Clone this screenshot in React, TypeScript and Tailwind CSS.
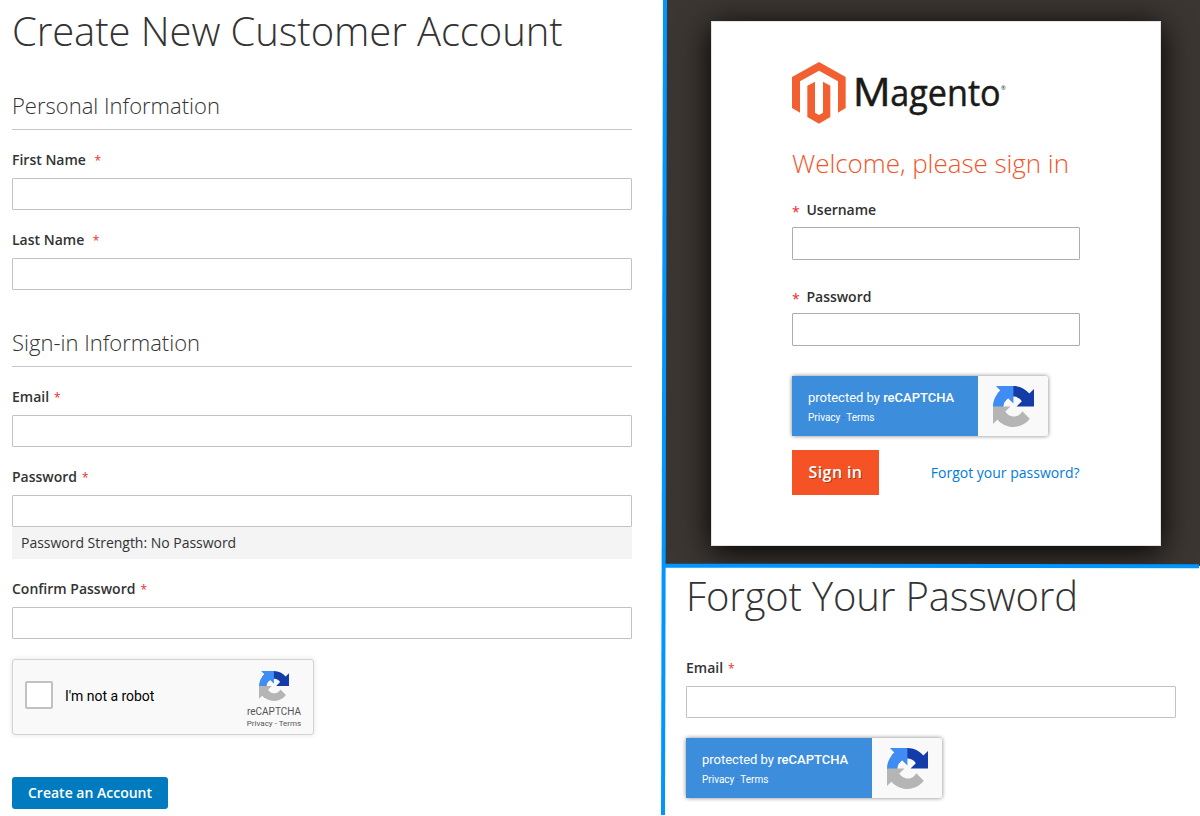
import React from 'react';

function RecaptchaMark({ className }: { className: string }) {
  return (
    <svg viewBox="0 0 64 64" className={className} aria-hidden="true">
      <path fill="#143ca8" d="M64 31.955l-.033-1.37V4.687l-7.16 7.16C50.948 4.674 42.033.093 32.05.093c-10.4 0-19.622 4.96-25.458 12.64l11.736 11.86a15.55 15.55 0 0 1 4.754-5.334c2.05-1.6 4.952-2.906 8.968-2.906.485 0 .86.057 1.135.163 4.976.393 9.288 3.14 11.828 7.124l-8.307 8.307L64 31.953" />
      <path fill="#3f8cf2" d="M31.862.094l-1.37.033H4.594l7.16 7.16C4.58 13.147 0 22.06 0 32.046c0 10.4 4.96 19.622 12.64 25.458L24.5 45.768a15.55 15.55 0 0 1-5.334-4.754c-1.6-2.05-2.906-4.952-2.906-8.968 0-.485.057-.86.163-1.135.393-4.976 3.14-9.288 7.124-11.828l8.307 8.307L31.86.095" />
      <path fill="#b5b5b5" d="M.001 32.045l.033 1.37v25.898l7.16-7.16c5.86 7.173 14.774 11.754 24.76 11.754 10.4 0 19.622-4.96 25.458-12.64l-11.736-11.86a15.55 15.55 0 0 1-4.754 5.334c-2.05 1.6-4.952 2.906-8.968 2.906-.485 0-.86-.057-1.135-.163-4.976-.393-9.288-3.14-11.828-7.124l8.307-8.307c-10.522.04-22.4.066-27.295-.005" />
    </svg>
  );
}

function MagentoLogo() {
  return (
    <svg viewBox="36 36 651 189" className="block h-[63px] w-[217px] overflow-visible" role="img">
      <path fill="#f26032" d="M36 81L117 36L197 81V174L174 188V94L117 62L60 94V188L36 174Z" />
      <path fill="#f26032" d="M82 107L105 95V188L117 195L129 188V95L151 107V201L117 221L82 201Z" />
      <text y="169" fontSize="115" fontWeight="500" fill="#1a1a18" stroke="#1a1a18" strokeWidth="1.5">
        <tspan x="218" textLength="114" lengthAdjust="spacingAndGlyphs">M</tspan>
        <tspan x="331" fontSize="112" textLength="331" lengthAdjust="spacingAndGlyphs">agento</tspan>
      </text>
      <text x="663" y="119" fontSize="17" fill="#1a1a18">®</text>
    </svg>
  );
}

function Field({ label, className = '', gap = 'ml-[5px]' }: { label: string; className?: string; gap?: string }) {
  return (
    <label className={`block ${className}`}>
      <span className="block h-7 text-sm leading-5 font-semibold text-[#333333]">
        {label}
        <span className={`${gap} text-xs font-normal text-[#f02b27]`}>*</span>
      </span>
      <input className="block h-8 w-full rounded-[1px] border border-[#c2c2c2] bg-white px-2" />
    </label>
  );
}

function AdminField({ label, labelClass }: { label: string; labelClass: string }) {
  return (
    <label className="block">
      <span className={`flex text-sm leading-5 font-semibold tracking-[-0.03px] text-[#303030] ${labelClass}`}>
        <span className="w-[14.5px] pt-[2px] font-normal text-[#f02626]">*</span>
        {label}
      </span>
      <input className="block h-[33px] w-full rounded-[1px] border border-[#adadad] bg-white px-2" />
    </label>
  );
}

function RecaptchaBadge({ className = '' }: { className?: string }) {
  return (
    <div className={`flex h-[60px] w-[256px] rounded-[2px] bg-[#f9f9f9] font-['Roboto',sans-serif] shadow-[0_0_4px_#808080] ${className}`}>
      <div className="w-[186px] bg-[#3d8ddd] pt-[14px] pl-4 text-white">
        <div className="text-[13px] leading-4 tracking-[-0.01px] whitespace-nowrap">
          protected by <span className="font-medium">reCAPTCHA</span>
        </div>
        <div className="mt-[6px] flex text-[10px] leading-3">
          <span>Privacy</span>
          <span className="w-[6px] text-center text-[#2e6fb0]">-</span>
          <span>Terms</span>
        </div>
      </div>
      <div className="flex flex-1 items-center justify-center">
        <RecaptchaMark className="h-[41px] w-[41px]" />
      </div>
    </div>
  );
}

function SectionTitle({ children, className }: { children: React.ReactNode; className: string }) {
  return (
    <h2 className={`h-[37px] border-b border-[#c6c6c6] text-[22px] leading-[25px] font-light text-[#333333] ${className}`}>
      {children}
    </h2>
  );
}

function CreateAccount() {
  return (
    <section className="flex w-[632px] shrink-0 flex-col items-start pt-2 pl-3">
      <h1 className="h-[85px] text-[40px] leading-[46px] font-light tracking-[-0.08px] whitespace-nowrap text-[#333333]">
        Create New Customer Account
      </h1>
      <SectionTitle className="w-full">Personal Information</SectionTitle>
      <Field label="First Name" gap="ml-[8.5px]" className="mt-5 w-full" />
      <Field label="Last Name" gap="ml-[8.5px]" className="mt-5 w-full" />
      <SectionTitle className="mt-10 w-full">Sign-in Information</SectionTitle>
      <Field label="Email" className="mt-5 w-full" />
      <Field label="Password" className="mt-5 w-full" />
      <div className="h-8 w-full bg-[#f4f4f4] pl-[9px] text-sm leading-8 tracking-[-0.02px] text-[#333333]">
        Password Strength: No Password
      </div>
      <Field label="Confirm Password" className="mt-5 w-full" />
      <div className="mt-5 flex h-[76px] w-[302px] rounded-[3px] border border-[#d3d3d3] bg-[#f9f9f9] pl-3 font-['Roboto',sans-serif] shadow-[0_0_4px_1px_rgba(0,0,0,0.08)]">
        <div className="mt-[21px] h-7 w-7 rounded-[2px] border-2 border-[#c1c1c1] bg-white" />
        <div className="mt-7 ml-3 flex-1 text-sm leading-[17px] tracking-[-0.03px] text-black">I'm not a robot</div>
        <div className="mr-[11px] flex w-[56px] flex-col items-center pt-[11px] text-[#555555]">
          <RecaptchaMark className="h-[30px] w-[30px]" />
          <div className="mt-[5px] text-[10px] leading-3">reCAPTCHA</div>
          <div className="mt-[1px] text-[8px] leading-[10px] whitespace-nowrap">Privacy - Terms</div>
        </div>
      </div>
      <button className="mt-[42px] h-8 w-[156px] rounded-[3px] bg-[#007bc0] text-sm font-semibold text-white">
        Create an Account
      </button>
    </section>
  );
}

function AdminLogin() {
  return (
    <section className="h-[566px] overflow-hidden bg-[#3b3632] pt-[21px] pl-[46px]">
      <div className="h-[525px] w-[450px] border border-[#e3e3e3] bg-white pt-10 pr-20 pl-20 shadow-[0_5px_30px_0_#000000]">
        <MagentoLogo />
        <h2 className="mt-5 text-[26px] leading-9 font-light tracking-[-0.04px] whitespace-nowrap text-[#f1562b]">
          Welcome, please sign in
        </h2>
        <div className="mt-[19px]">
          <AdminField label="Username" labelClass="h-[27px]" />
        </div>
        <div className="mt-[27px]">
          <AdminField label="Password" labelClass="h-[26px]" />
        </div>
        <RecaptchaBadge className="mt-[30px]" />
        <div className="mt-[14px] flex items-center justify-between">
          <button className="h-[45px] w-[87px] bg-[#f55326] pb-[2px] text-base font-semibold tracking-[0.4px] text-white [text-shadow:1px_1px_0_rgba(0,0,0,0.3)]">
            Sign in
          </button>
          <a className="mr-[0.5px] text-sm leading-5 text-[#007bdb]">Forgot your password?</a>
        </div>
      </div>
    </section>
  );
}

function ForgotPassword() {
  return (
    <section className="flex-1 pt-[7px] pl-[21px]">
      <h1 className="h-[85px] text-[40px] leading-[46px] font-light tracking-[-0.15px] text-[#333333]">
        Forgot Your Password
      </h1>
      <Field label="Email" className="w-[490px]" />
      <RecaptchaBadge className="mt-5" />
    </section>
  );
}

export default function App() {
  return (
    <main className="relative flex h-[816px] w-[1200px] overflow-hidden bg-white font-['Open_Sans',sans-serif]">
      <CreateAccount />
      <div className="ml-[33px] flex flex-1 flex-col">
        <AdminLogin />
        <ForgotPassword />
      </div>
      {/* Slightly slanted dividers laid over the seams between the three panels */}
      <div className="absolute top-0 left-[662px] h-[815px] w-1 -skew-x-[0.14deg] bg-[#0095ff]" />
      <div className="absolute top-[564px] left-[664px] h-1 w-[535px] skew-y-[0.08deg] bg-[#0095ff]" />
    </main>
  );
}
